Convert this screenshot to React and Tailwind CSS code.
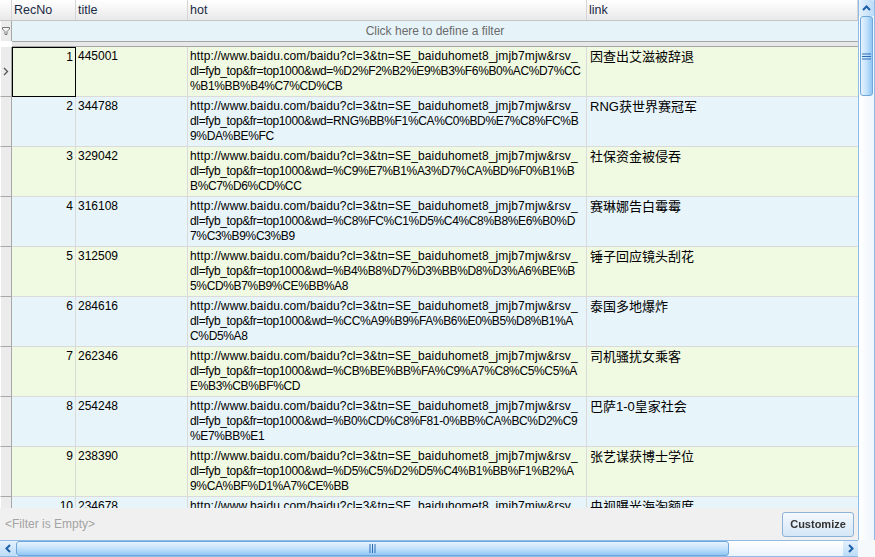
import React from "react";

const rows = [
  ["1", "445001", ["dl=fyb_top&fr=top1000&wd=%D2%F2%B2%E9%B3%F6%B0%AC%D7%CC", "%B1%BB%B4%C7%CD%CB"], "因查出艾滋被辞退"],
  ["2", "344788", ["dl=fyb_top&fr=top1000&wd=RNG%BB%F1%CA%C0%BD%E7%C8%FC%B", "9%DA%BE%FC"], "RNG获世界赛冠军"],
  ["3", "329042", ["dl=fyb_top&fr=top1000&wd=%C9%E7%B1%A3%D7%CA%BD%F0%B1%B", "B%C7%D6%CD%CC"], "社保资金被侵吞"],
  ["4", "316108", ["dl=fyb_top&fr=top1000&wd=%C8%FC%C1%D5%C4%C8%B8%E6%B0%D", "7%C3%B9%C3%B9"], "赛琳娜告白霉霉"],
  ["5", "312509", ["dl=fyb_top&fr=top1000&wd=%B4%B8%D7%D3%BB%D8%D3%A6%BE%B", "5%CD%B7%B9%CE%BB%A8"], "锤子回应镜头刮花"],
  ["6", "284616", ["dl=fyb_top&fr=top1000&wd=%CC%A9%B9%FA%B6%E0%B5%D8%B1%A", "C%D5%A8"], "泰国多地爆炸"],
  ["7", "262346", ["dl=fyb_top&fr=top1000&wd=%CB%BE%BB%FA%C9%A7%C8%C5%C5%A", "E%B3%CB%BF%CD"], "司机骚扰女乘客"],
  ["8", "254248", ["dl=fyb_top&fr=top1000&wd=%B0%CD%C8%F81-0%BB%CA%BC%D2%C9", "%E7%BB%E1"], "巴萨1-0皇家社会"],
  ["9", "238390", ["dl=fyb_top&fr=top1000&wd=%D5%C5%D2%D5%C4%B1%BB%F1%B2%A", "9%CA%BF%D1%A7%CE%BB"], "张艺谋获博士学位"],
  ["10", "234678", ["dl=fyb_top&fr=top1000&wd=%D1%EB%CA%D3%C6%D8%B9%E2%BA%A3", "%CC%D4%B6%EE%B6%C8"], "央视曝光海淘额度"],
];

const URL = "http://www.baidu.com/baidu?cl=3&tn=SE_baiduhomet8_jmjb7mjw&rsv_";

const Chevron = ({ dir }) => {
  const d = {
    up: "M2 7 L5.5 3.5 L9 7",
    left: "M7 2 L3.5 5.5 L7 9",
    right: "M4 2 L7.5 5.5 L4 9",
  }[dir];
  return (
    <svg width="11" height="11" viewBox="0 0 11 11">
      <path d={d} fill="none" stroke="#1d5fa8" strokeWidth="2" />
    </svg>
  );
};

const HeaderCell = ({ w, children }) => (
  <div
    className={`${w} h-full shrink-0 border-r border-[#d5d5d5] bg-gradient-to-b from-white to-[#e9e9e9] pl-[2px] flex items-center text-[12.5px] text-[#1a2a44]`}
  >
    {children}
  </div>
);

const GridRow = ({ row, i }) => {
  const [no, title, lines, link] = row;
  const bg = i % 2 === 0 ? "bg-[#f0f9e1]" : "bg-[#e7f4fa]";
  return (
    <div className="flex h-[50px] shrink-0">
      <div className="w-[12px] shrink-0 bg-[#ececec] border-r border-b border-[#a8a8a8] border-l border-l-white flex items-center justify-center">
        {i === 0 && (
          <svg width="6" height="9" viewBox="0 0 6 9">
            <path d="M1 1 L4.5 4.5 L1 8" fill="none" stroke="#555" strokeWidth="1.3" />
          </svg>
        )}
      </div>
      <div className={`flex flex-1 ${bg}`}>
        <div
          className={`w-[64px] shrink-0 text-right pr-[2px] pt-[2px] border-b border-r ${
            i === 0 ? "border border-black" : "border-[#dadada]"
          }`}
        >
          {no}
        </div>
        <div className="w-[112px] shrink-0 pl-[2px] pt-[2px] border-b border-r border-[#dadada]">{title}</div>
        <div className="w-[399px] shrink-0 pl-[2px] pt-[2px] border-b border-r border-[#dadada] whitespace-nowrap overflow-hidden leading-[15px]">
          <div className="tracking-[0.12px]">{URL}</div>
          <div className="tracking-[-0.35px]">{lines[0]}</div>
          <div className="tracking-[-0.35px]">{lines[1]}</div>
        </div>
        <div className="flex-1 pl-[3px] pt-[2px] border-b border-[#dadada] text-[13px] leading-[15px]">{link}</div>
      </div>
    </div>
  );
};

export default function App() {
  return (
    <div
      className="w-[875px] h-[557px] flex flex-col bg-white text-[12px] leading-[15px] text-black overflow-hidden"
      style={{ fontFamily: '"Liberation Sans", "Noto Sans CJK SC", sans-serif' }}
    >
      <div className="flex h-[540px]">
        <div className="w-[858px] flex flex-col">
          {/* column headers */}
          <div className="flex h-[21px] shrink-0 border-b border-[#c5c5c5]">
            <div className="w-[12px] shrink-0 border-r border-[#d5d5d5] bg-gradient-to-b from-white to-[#e9e9e9]" />
            <HeaderCell w="w-[64px]">RecNo</HeaderCell>
            <HeaderCell w="w-[112px]">title</HeaderCell>
            <HeaderCell w="w-[399px]">hot</HeaderCell>
            <HeaderCell w="flex-1">link</HeaderCell>
          </div>
          {/* filter row */}
          <div className="flex h-[20px] shrink-0">
            <div className="w-[12px] shrink-0 bg-[#ececec] border-r border-[#a8a8a8] border-l border-l-white flex items-center justify-center">
              <svg width="8" height="8" viewBox="0 0 8 8">
                <path d="M0.5 0.5 H7.5 V2 L5 4.5 V7.5 H3 V4.5 L0.5 2 Z" fill="#f4f4f4" stroke="#777" strokeWidth="1" />
              </svg>
            </div>
            <div className="flex-1 bg-[#e6f4fa] flex items-center justify-center text-[12px] text-[#6b6b6b]">
              Click here to define a filter
            </div>
          </div>
          <div className="h-[6px] shrink-0 border-t border-b border-[#a6a6a6] bg-[#e8e8e8] ml-[12px]" />
          {/* data rows */}
          <div className="flex-1 overflow-hidden flex flex-col min-h-0">
            {rows.map((r, i) => (
              <GridRow key={r[0]} row={r} i={i} />
            ))}
          </div>
          {/* filter panel */}
          <div className="h-[32px] shrink-0 bg-[#f0f0f0] flex items-center justify-between pl-[5px] pr-[4px]">
            <span className="text-[12px] text-[#a3a3a3]">&lt;Filter is Empty&gt;</span>
            <button className="w-[72px] h-[25px] rounded-[3px] border border-[#8db2d8] bg-gradient-to-b from-[#f4f9fe] to-[#d5e6f6] text-[11px] font-bold text-[#333] blur-[0.4px]">
              Customize
            </button>
          </div>
        </div>
        {/* vertical scrollbar */}
        <div className="w-[17px] flex flex-col bg-gradient-to-r from-white to-[#eef5fc] border-l border-r border-[#8fbbe6]">
          <div className="h-[16px] shrink-0 flex items-center justify-center bg-gradient-to-r from-[#e4f1fc] to-[#bcdcf8] rounded-t-[2px]">
            <Chevron dir="up" />
          </div>
          <div className="h-[80px] shrink-0 mx-[1px] rounded-[3px] border border-[#6ea7dc] bg-gradient-to-r from-[#e6f3fe] via-[#c4e2fb] to-[#8fc6f4] flex items-center justify-center">
            <svg width="9" height="7" viewBox="0 0 9 7">
              <path d="M0 1H9M0 3.5H9M0 6H9" stroke="#2f6eb5" strokeWidth="1" />
            </svg>
          </div>
          <div className="flex-1" />
        </div>
      </div>
      {/* horizontal scrollbar */}
      <div className="flex h-[17px]">
        <div className="w-[858px] flex border-t border-b border-[#8fbbe6] bg-gradient-to-b from-white to-[#eaf3fc]">
          <div className="w-[16px] shrink-0 flex items-center justify-center bg-gradient-to-b from-[#e4f1fc] to-[#bcdcf8]">
            <Chevron dir="left" />
          </div>
          <div className="w-[713px] shrink-0 rounded-[3px] border border-[#6ea7dc] bg-gradient-to-b from-[#e6f3fe] via-[#c4e2fb] to-[#8fc6f4] flex items-center justify-center">
            <svg width="7" height="9" viewBox="0 0 7 9">
              <path d="M1 0V9M3.5 0V9M6 0V9" stroke="#2f6eb5" strokeWidth="1" />
            </svg>
          </div>
          <div className="flex-1" />
          <div className="w-[15px] shrink-0 flex items-center justify-center bg-gradient-to-b from-[#e4f1fc] to-[#bcdcf8]">
            <Chevron dir="right" />
          </div>
        </div>
        <div className="flex-1 bg-[#f6f9fc]" />
      </div>
    </div>
  );
}
